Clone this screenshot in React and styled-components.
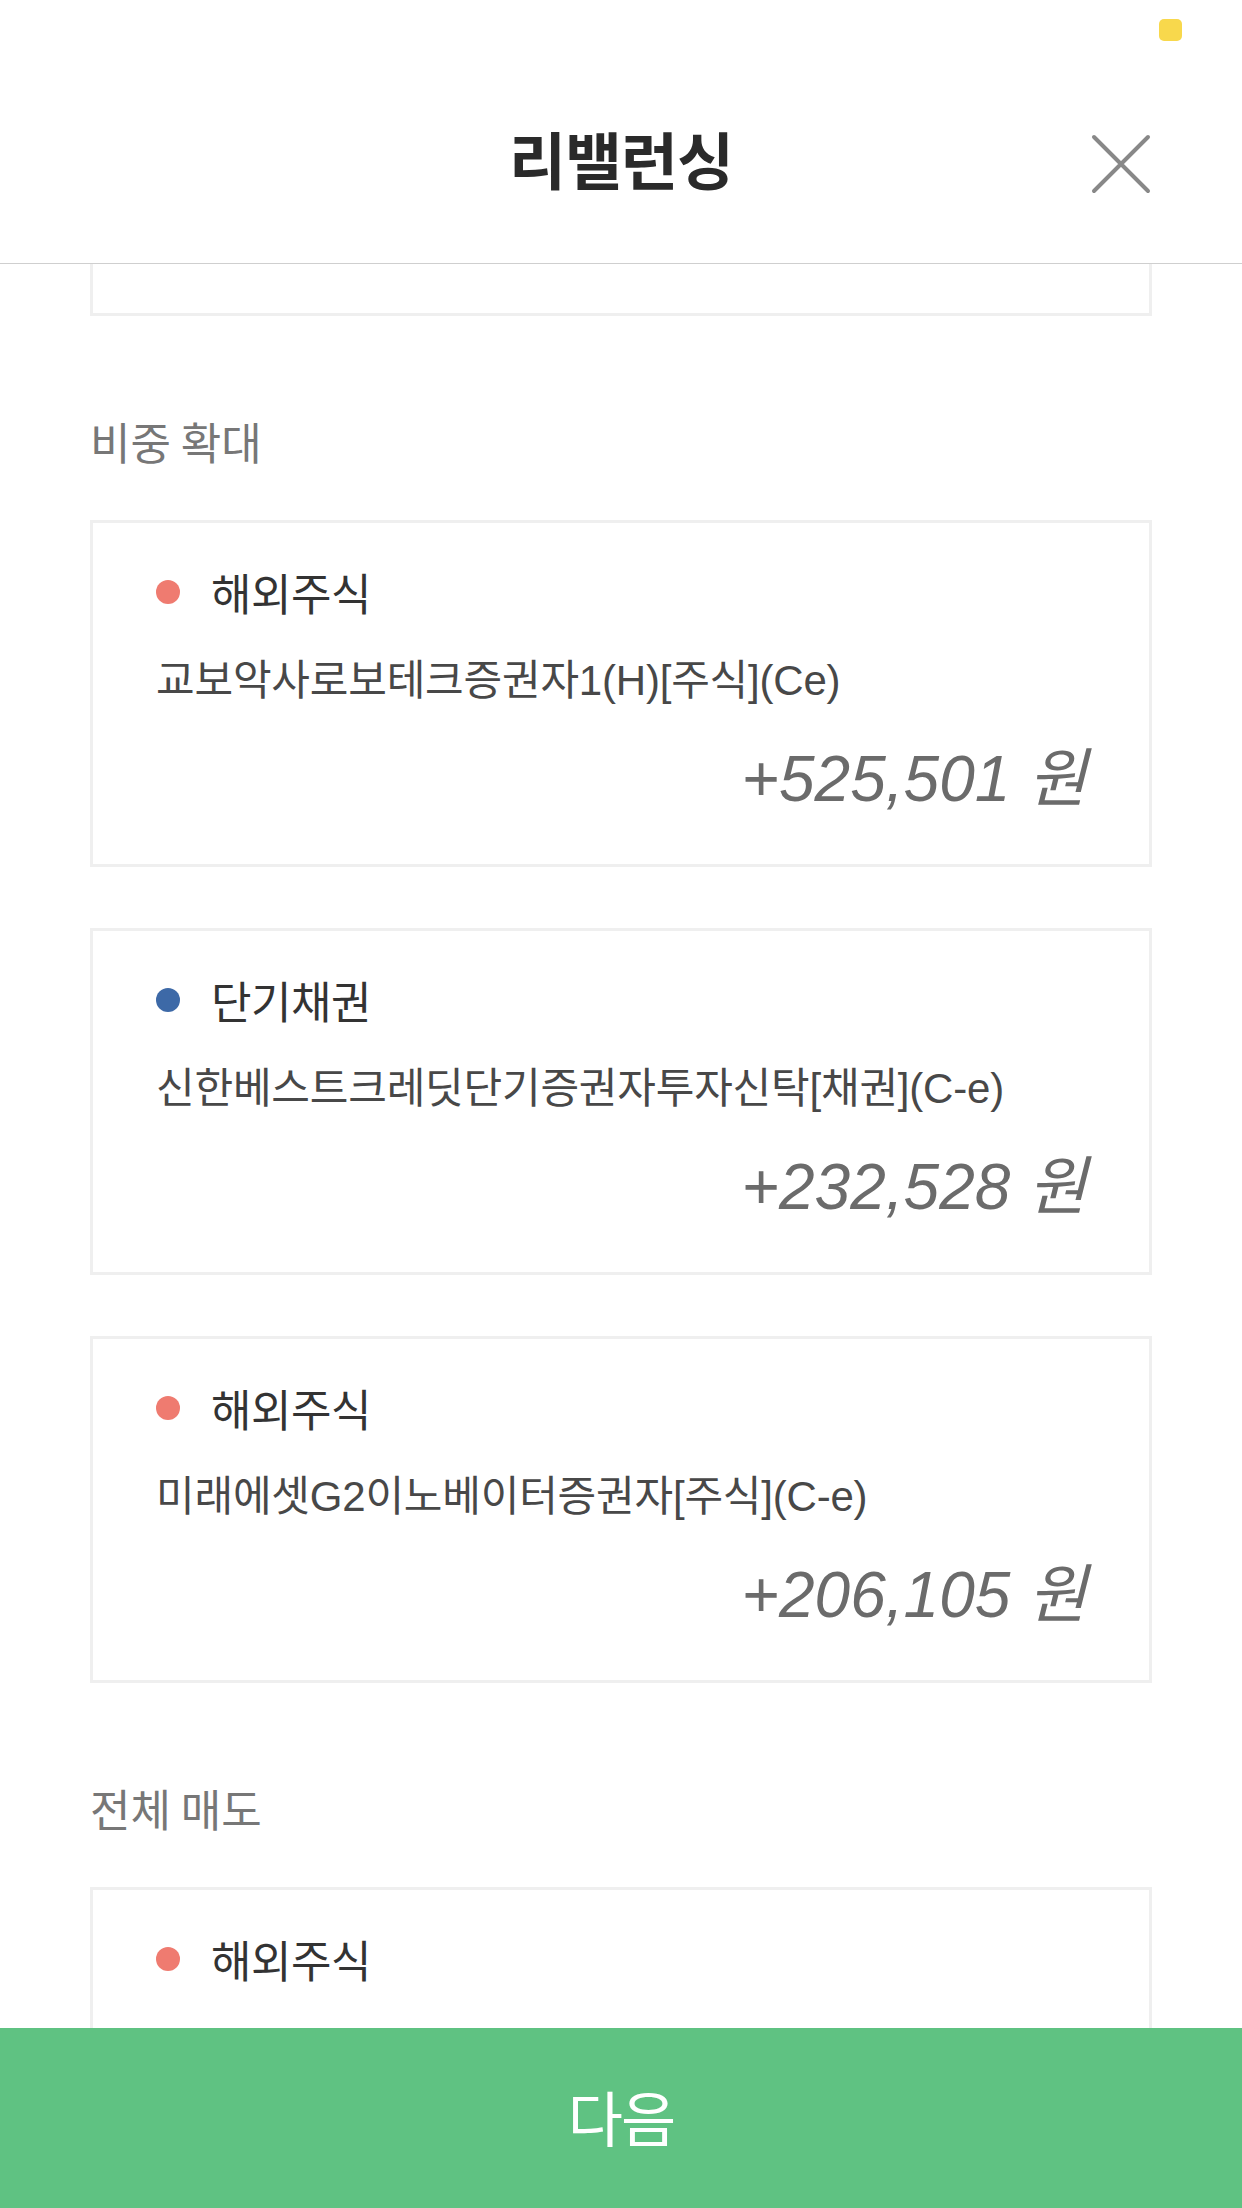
import React from "react";
import styled, { createGlobalStyle } from "styled-components";

const GlobalStyle = createGlobalStyle`
  html, body { margin: 0; padding: 0; background: #ffffff; }
  body {
    font-family: "Liberation Sans", "Noto Sans CJK KR", sans-serif;
    -webkit-font-smoothing: antialiased;
  }
  * { box-sizing: border-box; }
`;

const Screen = styled.div`
  width: 1242px;
  height: 2208px;
  display: flex;
  flex-direction: column;
  overflow: hidden;
  background: #fff;
`;

const Header = styled.header`
  flex: none;
  display: flex;
  flex-direction: column;
  border-bottom: 1px solid #cfcfcf;
`;

const StatusBar = styled.div`
  height: 60px;
  display: flex;
  justify-content: flex-end;
  align-items: flex-start;
  padding: 19px 60px 0 0;
`;

const Indicator = styled.span`
  width: 23px;
  height: 22px;
  border-radius: 5px;
  background: #f8d84c;
`;

const TitleBar = styled.div`
  height: 203px;
  display: grid;
  grid-template-columns: 1fr auto 1fr;
  align-items: center;
  padding: 0 91px;
`;

const Title = styled.h1`
  grid-column: 2;
  margin: 0 0 8px;
  font-family: "Noto Sans CJK KR", sans-serif;
  font-weight: 700;
  font-size: 62px;
  letter-spacing: -1px;
  line-height: 80px;
  color: #2a2a2a;
`;

const CloseButton = styled.button`
  grid-column: 3;
  justify-self: end;
  width: 60px;
  height: 60px;
  padding: 0;
  border: 0;
  background: none;
  display: flex;
  margin-top: 4px;
`;

const Content = styled.main`
  flex: 1;
  overflow: hidden;
  padding: 0 90px;
  display: flex;
  flex-direction: column;
`;

const CardStub = styled.div`
  height: 52px;
  flex: none;
  border: 3px solid #efefef;
  border-top: 0;
`;

const SectionLabel = styled.h2`
  margin: 0;
  padding: 95px 0 49px;
  font-family: "Noto Sans CJK KR", sans-serif;
  font-weight: 400;
  font-size: 44px;
  letter-spacing: 0;
  line-height: 60px;
  color: #777;
  flex: none;
`;

const CardList = styled.div`
  display: flex;
  flex-direction: column;
  gap: 61px;
  flex: none;
`;

const Card = styled.section`
  flex: none;
  height: ${(p) => (p.$partial ? "auto" : "347px")};
  border: 3px solid #efefef;
  padding: 41px 62px 45px 63px;
  display: flex;
  flex-direction: column;
`;

const CategoryRow = styled.div`
  display: flex;
  align-items: center;
  gap: 31px;
  height: 56px;
`;

const Dot = styled.span`
  width: 24px;
  height: 24px;
  border-radius: 50%;
  background: ${(p) => p.$color};
  flex: none;
`;

const Category = styled.span`
  font-family: "Noto Sans CJK KR", sans-serif;
  font-size: 44px;
  letter-spacing: -0.5px;
  line-height: 56px;
  color: #333;
`;

const FundName = styled.div`
  margin-top: 33px;
  font-size: 42px;
  letter-spacing: -0.2px;
  line-height: 56px;
  color: #484848;
  white-space: nowrap;
`;

const Amount = styled.div`
  margin-top: 30px;
  text-align: right;
  font-style: italic;
  font-size: 64px;
  line-height: 80px;
  color: #6b6b6b;
  white-space: nowrap;
`;

const NextButton = styled.button`
  flex: none;
  height: 180px;
  width: 100%;
  border: 0;
  background: #5fc282;
  color: #fff;
  font-family: "Noto Sans CJK KR", sans-serif;
  font-weight: 400;
  font-size: 60px;
  letter-spacing: -2px;
  padding: 0 0 6px;
`;

const CloseIcon = () => (
  <svg width="60" height="60" viewBox="0 0 60 60">
    <path
      d="M3 3 L57 57 M57 3 L3 57"
      stroke="#888"
      strokeWidth="4"
      strokeLinecap="round"
      fill="none"
    />
  </svg>
);

const expand = [
  {
    color: "#ef7b70",
    category: "해외주식",
    name: "교보악사로보테크증권자1(H)[주식](Ce)",
    amount: "+525,501 원",
  },
  {
    color: "#3d69a7",
    category: "단기채권",
    name: "신한베스트크레딧단기증권자투자신탁[채권](C-e)",
    amount: "+232,528 원",
  },
  {
    color: "#ef7b70",
    category: "해외주식",
    name: "미래에셋G2이노베이터증권자[주식](C-e)",
    amount: "+206,105 원",
  },
];

export default function App() {
  return (
    <>
      <GlobalStyle />
      <Screen>
        <Header>
          <StatusBar>
            <Indicator />
          </StatusBar>
          <TitleBar>
            <Title>리밸런싱</Title>
            <CloseButton aria-label="닫기">
              <CloseIcon />
            </CloseButton>
          </TitleBar>
        </Header>
        <Content>
          <CardStub />
          <SectionLabel>비중 확대</SectionLabel>
          <CardList>
            {expand.map((item, i) => (
              <Card key={i}>
                <CategoryRow>
                  <Dot $color={item.color} />
                  <Category>{item.category}</Category>
                </CategoryRow>
                <FundName>{item.name}</FundName>
                <Amount>{item.amount}</Amount>
              </Card>
            ))}
          </CardList>
          <SectionLabel>전체 매도</SectionLabel>
          <Card $partial>
            <CategoryRow>
              <Dot $color="#ef7b70" />
              <Category>해외주식</Category>
            </CategoryRow>
          </Card>
        </Content>
        <NextButton>다음</NextButton>
      </Screen>
    </>
  );
}
